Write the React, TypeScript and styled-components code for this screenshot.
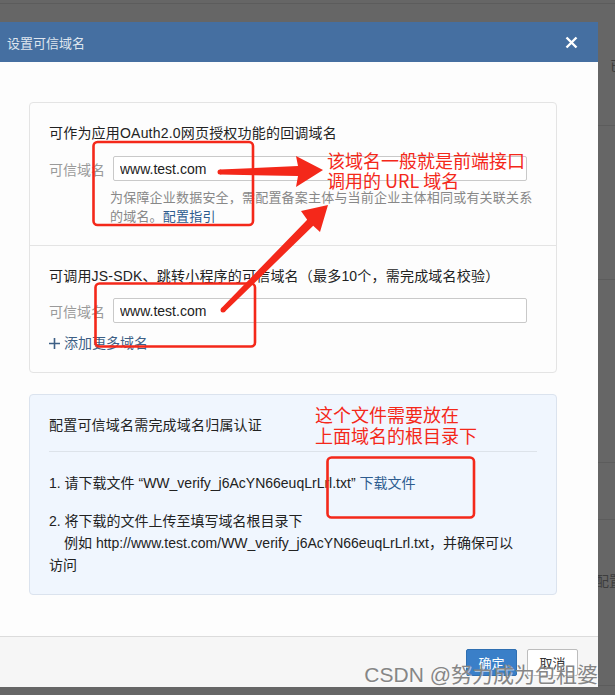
import React from 'react';
import styled, { createGlobalStyle } from 'styled-components';

const GlobalStyle = createGlobalStyle`
  html, body {
    margin: 0;
    padding: 0;
    background: #666;
  }
  body {
    font-family: "Liberation Sans", "Noto Sans CJK SC", sans-serif;
    overflow: hidden;
  }
`;

const RED = '#f4281a';

const Page = styled.div`
  position: relative;
  width: 615px;
  height: 695px;
  overflow: hidden;
  background: #666;
  display: flex;
  flex-direction: column;
`;

const TopBand = styled.div`
  flex: none;
  height: 22px;
  background: linear-gradient(#666 0 3px, #5c5c5c 3px 4px, #666 4px);
`;

const Stage = styled.div`
  flex: 1;
  display: flex;
  align-items: flex-start;
  min-height: 0;
`;

const Modal = styled.div`
  flex: none;
  width: 610px;
  margin-left: -12px;
  display: flex;
  flex-direction: column;
  background: #fdfdfd;
`;

const Header = styled.div`
  height: 40px;
  display: flex;
  align-items: center;
  justify-content: space-between;
  padding: 0 20px 0 19px;
  background: #456fa1;
  color: #dfe6ef;
  font-size: 13px;
`;

const CloseBtn = styled.span`
  display: flex;
  width: 13px;
  height: 13px;
`;

const Body = styled.div`
  padding: 40px 41px 41px;
  display: flex;
  flex-direction: column;
  gap: 21px;
`;

const Card = styled.div`
  border: 1px solid #e4e4e4;
  border-radius: 4px;
  background: #fdfdfd;
`;

const Section = styled.div`
  padding: 20px 19px 19px;
  & + & {
    border-top: 1px solid #e4e4e4;
  }
`;

const Heading = styled.div`
  font-size: 14px;
  letter-spacing: 0.2px;
  line-height: 20px;
  color: #222;
`;

const Field = styled.div<{ $top: number }>`
  display: flex;
  align-items: center;
  margin-top: ${(p) => p.$top}px;
`;

const Label = styled.span`
  width: 64px;
  font-size: 14px;
  color: #9a9a9a;
`;

const Input = styled.input`
  box-sizing: border-box;
  width: 414px;
  height: 25px;
  margin: 0;
  padding: 0 6px;
  border: 1px solid #c9c9c9;
  border-radius: 2px;
  background: #fff;
  font-family: inherit;
  font-size: 14px;
  color: #222;
  outline: none;
`;

const Help = styled.div`
  width: 428px;
  margin-top: 7px;
  padding-left: 61px;
  font-size: 13px;
  letter-spacing: 0.2px;
  line-height: 19px;
  color: #888;
`;

const Link = styled.a`
  color: #2d5c8f;
  text-decoration: none;
`;

const AddMore = styled.div`
  display: flex;
  align-items: center;
  gap: 4px;
  margin-top: 10px;
  font-size: 14px;
  line-height: 20px;
  color: #3d5f85;
`;

const VerifyCard = styled.div`
  border: 1px solid #dbe3ee;
  border-radius: 4px;
  background: #f0f6fe;
  padding: 20px 19px 18px;
`;

const VerifyHead = styled(Heading)`
  padding-bottom: 16px;
  border-bottom: 1px solid #dde3ea;
`;

const Steps = styled.div`
  max-width: 472px;
  margin-top: 20px;
  display: flex;
  flex-direction: column;
  gap: 16px;
`;

const Step = styled.div`
  font-size: 14px;
  line-height: 22px;
  color: #222;
`;

const Example = styled.div`
  text-indent: 15px;
`;

const Footer = styled.div`
  box-sizing: border-box;
  height: 51px;
  display: flex;
  justify-content: flex-end;
  align-items: flex-start;
  gap: 10px;
  padding: 12px 20px 0;
  border-top: 1px solid #dcdcdc;
  background: #f6f6f6;
`;

const Button = styled.button<{ $primary?: boolean }>`
  box-sizing: border-box;
  width: 51px;
  height: 27px;
  padding: 0;
  border-radius: 2px;
  font-family: inherit;
  font-size: 13px;
  border: 1px solid ${(p) => (p.$primary ? '#2f6fb1' : '#bdbdbd')};
  background: ${(p) => (p.$primary ? '#3a7fc8' : '#fff')};
  color: ${(p) => (p.$primary ? '#fff' : '#333')};
`;

const Strip = styled.div`
  flex: 1;
  display: flex;
  flex-direction: column;
  overflow: hidden;
`;

const StripRow = styled.div<{ $h: number }>`
  height: ${(p) => p.$h}px;
  border-bottom: 1px solid #5c5c5c;
  font-size: 14px;
  color: #3d3d3d;
  white-space: nowrap;
`;

const StripText = styled.div<{ $top: number; $left: number }>`
  padding-top: ${(p) => p.$top}px;
  margin-left: ${(p) => p.$left}px;
  line-height: 16px;
`;

const Overlay = styled.svg`
  position: absolute;
  left: 0;
  top: 0;
  pointer-events: none;
`;

const Note = styled.div<{ $x: number; $y: number; $lh: number }>`
  position: absolute;
  left: ${(p) => p.$x}px;
  top: ${(p) => p.$y}px;
  font-family: "Noto Sans CJK SC", sans-serif;
  font-size: 18px;
  line-height: ${(p) => p.$lh}px;
  color: ${RED};
  white-space: nowrap;
`;

const Watermark = styled.div`
  position: absolute;
  right: 17px;
  top: 662px;
  font-size: 21px;
  line-height: 26px;
  color: #868686;
  text-shadow: 1px 1px 0 rgba(255, 255, 255, 0.55);
  white-space: nowrap;
`;

const FILE = 'WW_verify_j6AcYN66euqLrLrl.txt';

export default function App() {
  return (
    <Page>
      <GlobalStyle />
      <TopBand />
      <Stage>
        <Modal>
          <Header>
            <span>设置可信域名</span>
            <CloseBtn>
              <svg width='13' height='13' viewBox='0 0 13 13'>
                <path d='M1.5 1.5 L11.5 11.5 M11.5 1.5 L1.5 11.5' stroke='#fff' strokeWidth='2.4' />
              </svg>
            </CloseBtn>
          </Header>
          <Body>
            <Card>
              <Section>
                <Heading>可作为应用OAuth2.0网页授权功能的回调域名</Heading>
                <Field $top={13}>
                  <Label>可信域名</Label>
                  <Input readOnly value='www.test.com' />
                </Field>
                <Help>
                  为保障企业数据安全，需配置备案主体与当前企业主体相同或有关联关系的域名。
                  <Link>配置指引</Link>
                </Help>
              </Section>
              <Section>
                <Heading>可调用JS-SDK、跳转小程序的可信域名（最多10个，需完成域名校验）</Heading>
                <Field $top={12}>
                  <Label>可信域名</Label>
                  <Input readOnly value='www.test.com' />
                </Field>
                <AddMore>
                  <svg width='11' height='11' viewBox='0 0 11 11'>
                    <path d='M5.5 0 V11 M0 5.5 H11' stroke='#3d5f85' strokeWidth='1.6' />
                  </svg>
                  <span>添加更多域名</span>
                </AddMore>
              </Section>
            </Card>
            <VerifyCard>
              <VerifyHead>配置可信域名需完成域名归属认证</VerifyHead>
              <Steps>
                <Step>
                  1. 请下载文件 “{FILE}” <Link>下载文件</Link>
                </Step>
                <Step>
                  <div>2. 将下载的文件上传至填写域名根目录下</div>
                  <Example>例如 http://www.test.com/{FILE}，并确保可以访问</Example>
                </Step>
              </Steps>
            </VerifyCard>
          </Body>
          <Footer>
            <Button $primary>确定</Button>
            <Button>取消</Button>
          </Footer>
        </Modal>
        <Strip>
          <StripRow $h={103}>
            <StripText $top={36} $left={12}>已</StripText>
          </StripRow>
          <StripRow $h={153} />
          <StripRow $h={182} />
          <StripRow $h={56} />
          <StripRow $h={165}>
            <StripText $top={53} $left={-3}>配置</StripText>
          </StripRow>
        </Strip>
      </Stage>

      <Overlay width='615' height='695' viewBox='0 0 615 695'>
        <g fill='none' stroke={RED} strokeWidth='2.6'>
          <rect x='93.5' y='142' width='159.5' height='83' rx='4' />
          <rect x='95.5' y='283.5' width='159.5' height='63' rx='4' />
          <rect x='327.5' y='457.5' width='146.5' height='60' rx='4' />
        </g>
        <g fill={RED}>
          <circle cx='220' cy='172' r='2.5' />
          <polygon points='220,169.5 298,166 296,156 323,170 296,187 298,176 220,174.5' />
          <circle cx='223' cy='310' r='2.5' />
          <polygon points='221.2,308.2 307.2,219.8 301,211 328,205 320,232 313.2,225.8 224.8,311.8' />
        </g>
      </Overlay>
      <Note $x={327} $y={151} $lh={19.5}>
        该域名一般就是前端接口
        <br />
        调用的 URL 域名
      </Note>
      <Note $x={315} $y={404} $lh={21}>
        这个文件需要放在
        <br />
        上面域名的根目录下
      </Note>
      <Watermark>CSDN @努力成为包租婆</Watermark>
    </Page>
  );
}
